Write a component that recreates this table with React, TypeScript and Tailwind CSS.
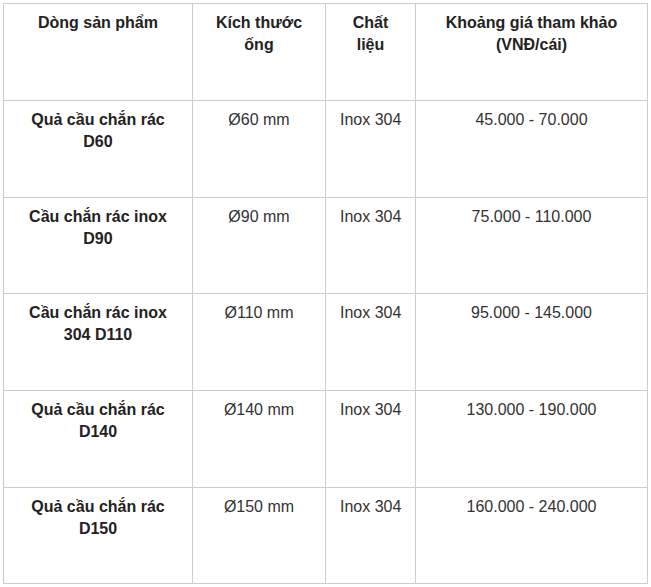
const rows = [
  { name: 'Quả cầu chắn rác D60', size: 'Ø60 mm', material: 'Inox 304', price: '45.000 - 70.000', h: 'h-[97px]' },
  { name: 'Cầu chắn rác inox D90', size: 'Ø90 mm', material: 'Inox 304', price: '75.000 - 110.000', h: 'h-[96px]' },
  { name: 'Cầu chắn rác inox 304 D110', size: 'Ø110 mm', material: 'Inox 304', price: '95.000 - 145.000', h: 'h-[97px]' },
  { name: 'Quả cầu chắn rác D140', size: 'Ø140 mm', material: 'Inox 304', price: '130.000 - 190.000', h: 'h-[97px]' },
  { name: 'Quả cầu chắn rác D150', size: 'Ø150 mm', material: 'Inox 304', price: '160.000 - 240.000', h: 'h-[96px]' },
]

const cell = 'border border-[#cccccc] px-[14px] pt-[8px] align-top text-center'

export default function App() {
  return (
    <div className="min-h-screen bg-white p-[3px] font-['Liberation_Sans',Arial,sans-serif] text-[16px] leading-[22px]">
      <table className="w-[645px] table-fixed border-collapse">
        <colgroup>
          <col className="w-[189px]" />
          <col className="w-[133px]" />
          <col className="w-[90px]" />
          <col className="w-[232px]" />
        </colgroup>
        <thead>
          <tr className="h-[97px]">
            <th className={`${cell} font-bold text-[#222222]`}>Dòng sản phẩm</th>
            <th className={`${cell} font-bold text-[#222222]`}>Kích thước ống</th>
            <th className={`${cell} font-bold text-[#222222]`}>
              Chất
              <br />
              liệu
            </th>
            <th className={`${cell} font-bold text-[#222222]`}>Khoảng giá tham khảo (VNĐ/cái)</th>
          </tr>
        </thead>
        <tbody>
          {rows.map((r) => (
            <tr key={r.name} className={r.h}>
              <td className={`${cell} font-bold text-[#222222]`}>{r.name}</td>
              <td className={`${cell} text-[#333333]`}>{r.size}</td>
              <td className={`${cell} whitespace-nowrap text-[#333333]`}>{r.material}</td>
              <td className={`${cell} text-[#333333]`}>{r.price}</td>
            </tr>
          ))}
        </tbody>
      </table>
    </div>
  )
}
